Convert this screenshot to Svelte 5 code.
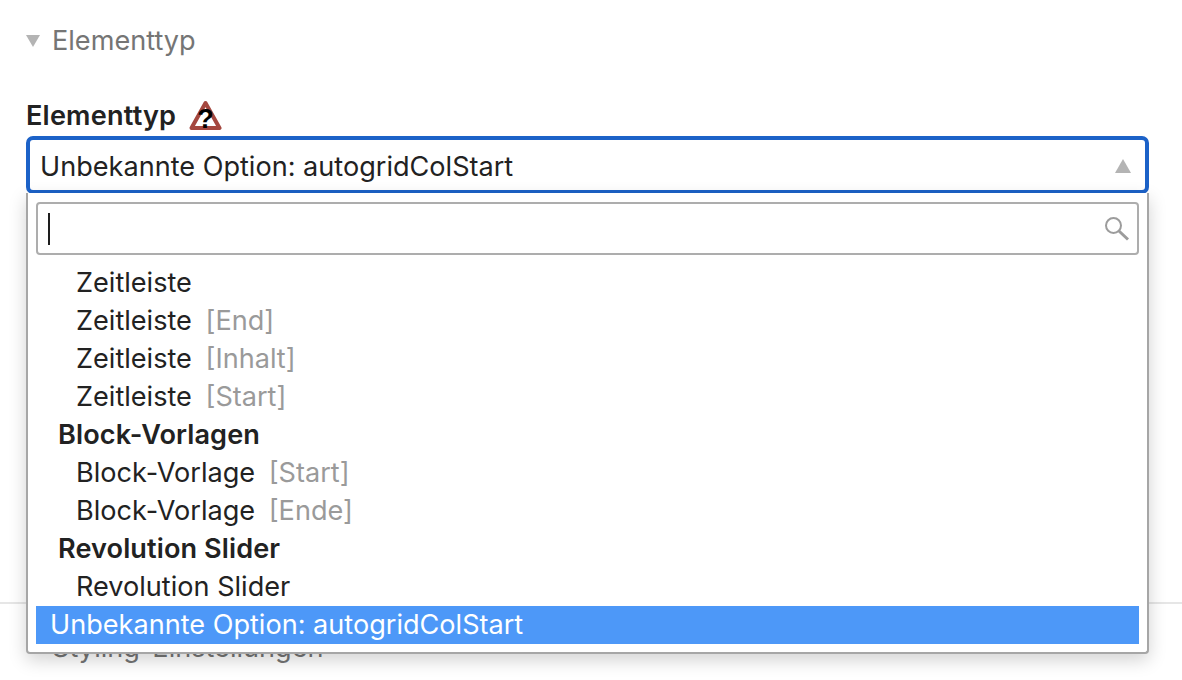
<script>
  // Geöffnetes Auswahlfeld "Elementtyp" mit Suchfeld und gruppierter Liste.
  const rows = [
    { label: 'Zeitleiste' },
    { label: 'Zeitleiste', tag: '[End]' },
    { label: 'Zeitleiste', tag: '[Inhalt]' },
    { label: 'Zeitleiste', tag: '[Start]' },
    { group: 'Block-Vorlagen' },
    { label: 'Block-Vorlage', tag: '[Start]' },
    { label: 'Block-Vorlage', tag: '[Ende]' },
    { group: 'Revolution Slider' },
    { label: 'Revolution Slider' }
  ];
  const current = 'Unbekannte Option: autogridColStart';
</script>

<div class="page">
  <section class="panel panel--first">
    <header class="panel__head">
      <span class="caret"></span>
      <span>Elementtyp</span>
    </header>

    <div class="field">
      <div class="field__label">
        <span class="field__name">Elementtyp</span>
        <svg class="warn" width="34" height="38" viewBox="0 -3 34 38" aria-hidden="true">
          <path d="M17.5 3 L31.5 28 H3.5 Z" fill="#fff" stroke="#a5473f" stroke-width="4" stroke-linejoin="round" />
          <text x="17.5" y="28" text-anchor="middle" class="warn__q">?</text>
        </svg>
      </div>

      <div class="select">
        <div class="select__value">
          <span class="select__text">{current}</span>
          <span class="select__arrow"></span>
        </div>

        <div class="menu">
          <div class="search">
            <span class="search__cursor"></span>
            <svg width="28" height="28" viewBox="0 0 28 28" aria-hidden="true">
              <circle cx="10.5" cy="10.5" r="7.5" fill="none" stroke="#9c9c9c" stroke-width="2" />
              <path d="M16 16 L25 24.5" stroke="#9c9c9c" stroke-width="3" />
            </svg>
          </div>
          <ul class="list">
            {#each rows as row}
              {#if row.group}
                <li class="list__group">{row.group}</li>
              {:else}
                <li class="list__item">
                  {row.label}
                  {#if row.tag}<span class="list__tag">{row.tag}</span>{/if}
                </li>
              {/if}
            {/each}
            <li class="list__current">{current}</li>
          </ul>
        </div>
      </div>
    </div>
  </section>

  <section class="panel">
    <header class="panel__head">
      <span class="caret"></span>
      <span>Styling-Einstellungen</span>
    </header>
  </section>
</div>

<style>
  :global(body) {
    margin: 0;
    background: #fff;
  }
  .page {
    width: 1182px;
    height: 680px;
    overflow: hidden;
    font-family: Inter, 'Noto Sans', sans-serif;
    font-size: 27.1px;
    line-height: 38px;
    color: #222;
  }
  .panel {
    border-top: 2px solid #e6e6e6;
    padding: 25px 26px 0;
  }
  .panel--first {
    border-top: 0;
    height: 580px;
    padding-top: 22px;
  }
  .panel__head {
    display: flex;
    align-items: center;
    gap: 12px;
    color: #757575;
  }
  .caret {
    width: 0;
    height: 0;
    border-left: 7px solid transparent;
    border-right: 7px solid transparent;
    border-top: 12px solid #b4b4b4;
  }
  .field {
    margin-top: 37px;
  }
  .field__label {
    display: flex;
    align-items: center;
    gap: 12px;
    height: 38px;
    font-weight: 600;
  }
  .field__name {
    letter-spacing: 0.2px;
  }
  .warn__q {
    font-family: 'Liberation Sans', sans-serif;
    font-size: 27px;
    font-weight: 700;
    fill: #000;
  }
  .select {
    position: relative;
    width: 1123px;
    margin-top: 1px;
  }
  .select__value {
    box-sizing: border-box;
    height: 58px;
    padding: 1px 14px 0 10px;
    display: flex;
    align-items: center;
    justify-content: space-between;
    border: 4px solid #1c62c8;
    border-radius: 7px;
  }
  .select__text {
    padding-top: 2px;
  }
  .select__arrow {
    width: 0;
    height: 0;
    border-left: 8.5px solid transparent;
    border-right: 8.5px solid transparent;
    border-bottom: 14px solid #b4b4b4;
  }
  .menu {
    position: absolute;
    top: 57px;
    left: 0;
    right: 0;
    box-sizing: border-box;
    height: 461px;
    padding: 9px 8px 0;
    background: #fff;
    border: 2px solid #a6a6a6;
    border-top: 0;
    border-radius: 0 0 4px 4px;
    box-shadow: 0 6px 18px rgba(0, 0, 0, 0.18);
  }
  .search {
    box-sizing: border-box;
    height: 53px;
    padding: 0 6px 0 10px;
    display: flex;
    align-items: center;
    justify-content: space-between;
    border: 2px solid #adadad;
    border-radius: 4px;
  }
  .search__cursor {
    width: 2px;
    height: 32px;
    background: #1e1e1e;
  }
  .list {
    list-style: none;
    margin: 9px 0 0;
    padding: 0;
  }
  .list__item {
    padding-left: 40px;
  }
  .list__group {
    padding-left: 22px;
    font-weight: 600;
    letter-spacing: 0.1px;
  }
  .list__tag {
    margin-left: 6px;
    color: #9a9a9a;
  }
  .list__current {
    padding-left: 14px;
    background: #4d98f8;
    color: #fff;
  }
</style>
